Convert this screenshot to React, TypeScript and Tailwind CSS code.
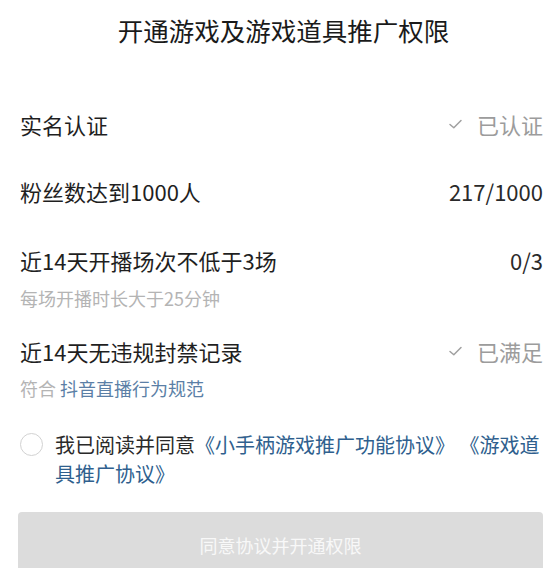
import React from "react";

const font = { fontFamily: '"Noto Sans CJK SC", "Noto Sans", sans-serif' };

function Check() {
  return (
    <svg width="15" height="12" viewBox="0 0 15 12" fill="none" className="mr-[14px]">
      <path d="M2 6.5 L5.8 9.8 L13 2.5" stroke="#a0a0a0" strokeWidth="1.5" strokeLinecap="round" strokeLinejoin="round" />
    </svg>
  );
}

function Row({
  label,
  right,
  done,
  className,
}: {
  label: string;
  right: string;
  done?: boolean;
  className?: string;
}) {
  return (
    <div className={`flex items-center justify-between h-[30px] ${className ?? ""}`}>
      <span className="text-[22px] leading-[30px] text-[#1f1f1f]">{label}</span>
      <span className="flex items-center">
        {done && <Check />}
        <span className={`text-[22px] leading-[30px] ${done ? "text-[#9c9c9c]" : "text-[#2a2a2a]"}`}>{right}</span>
      </span>
    </div>
  );
}

export default function App() {
  return (
    <div className="w-[559px] h-[568px] bg-white overflow-hidden" style={font}>
      <div className="pl-[20px] pr-[16px]">
        <h1 className="pt-[12px] text-center text-[25.5px] leading-[36px] font-normal text-[#1a1a1a] pl-[4px]">
          开通游戏及游戏道具推广权限
        </h1>

        <Row label="实名认证" right="已认证" done className="mt-[61px]" />
        <Row label="粉丝数达到1000人" right="217/1000" className="mt-[37px]" />

        <Row label="近14天开播场次不低于3场" right="0/3" className="mt-[39px]" />
        <p className="mt-[11px] text-[18px] leading-[24px] text-[#b4b4b4]">每场开播时长大于25分钟</p>

        <Row label="近14天无违规封禁记录" right="已满足" done className="mt-[26px]" />
        <p className="mt-[10px] text-[18px] leading-[24px] text-[#b4b4b4]">
          符合 <span className="text-[#5b7fa6]">抖音直播行为规范</span>
        </p>

        <div className="mt-[30px] flex items-start">
          <span className="mt-[3px] w-[23px] h-[23px] shrink-0 rounded-full border-[1.5px] border-[#d2d2d2]" />
          <p className="ml-[12px] text-[20px] leading-[29px] text-[#2a2a2a]">
            我已阅读并同意
            <span className="text-[#2f5f8e]">《小手柄游戏推广功能协议》 《游戏道具推广协议》</span>
          </p>
        </div>

        <button className="mt-[24px] w-[525px] h-[66px] rounded-[4px] bg-[#dcdcdc] text-[#f8f8f8] text-[18px] -ml-[2px]">
          同意协议并开通权限
        </button>
      </div>
    </div>
  );
}
